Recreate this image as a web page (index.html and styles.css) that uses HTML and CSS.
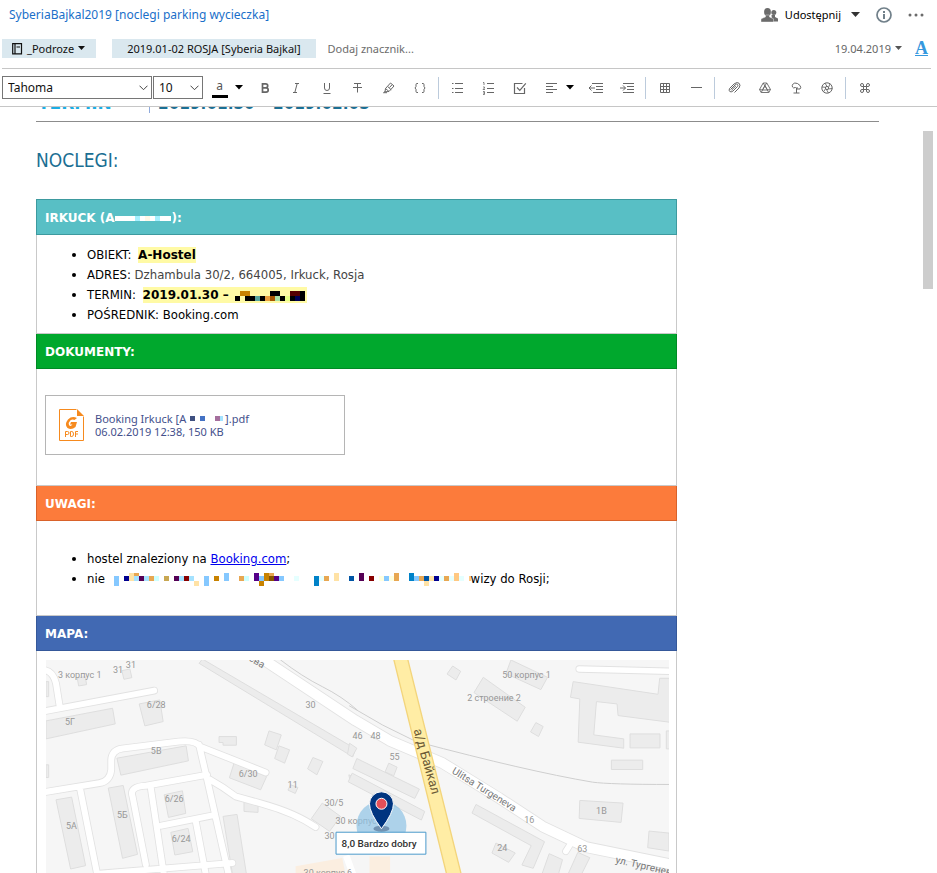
FILE: index.html
```html
<!DOCTYPE html>
<html lang="pl">
<head>
<meta charset="utf-8">
<meta name="viewport" content="width=device-width, initial-scale=1">
<title>SyberiaBajkal2019</title>
<link rel="stylesheet" href="styles.css">
</head>
<body>
<header class="note-head">
  <div class="title-row">
    <h1 class="note-title">SyberiaBajkal2019 [noclegi parking wycieczka]</h1>
    <button class="share" type="button">
      <svg width="18" height="14" viewBox="0 0 18 14"><g fill="#6b6b6b"><circle cx="12.800" cy="4.500" r="2.500"/><path d="M10.500 7h3.500v2l3 1.500v3h-6z"/><ellipse cx="6.500" cy="4" rx="3.400" ry="4"/><path d="M4.500 7h4v2l4 1.800v3.200H0v-2.500q0-1.200 4.500-2.500z" stroke="#fff" stroke-width=".4"/></g></svg>
      <span>Udostępnij</span>
      <svg width="9" height="5" viewBox="0 0 9 5"><path d="M0 0h9L4.500 5z" fill="#333"/></svg>
    </button>
    <button class="plain" type="button" aria-label="Informacje"><svg width="16" height="16" viewBox="0 0 16 16"><circle cx="8" cy="8" r="7" fill="none" stroke="#71808a" stroke-width="1.700"/><path d="M7 4h2v2H7zM7 7h2v5H7z" fill="#71808a"/></svg></button>
    <button class="plain" type="button" aria-label="Więcej"><svg width="16" height="4" viewBox="0 0 16 4"><g fill="#6b6b6b"><circle cx="2" cy="2" r="1.500"/><circle cx="8" cy="2" r="1.500"/><circle cx="14" cy="2" r="1.500"/></g></svg></button>
  </div>
  <div class="tag-row">
    <button class="chip" type="button">
      <svg width="11" height="12" viewBox="0 0 11 12"><path d="M.7.600h8.800v10.300H.7zM3 .6v10.300M4.500 4h3.500" fill="none" stroke="#111" stroke-width="1.200"/></svg>
      <span>_Podroze</span>
      <svg width="7" height="5" viewBox="0 0 7 5"><path d="M0 0h7L3.500 4z" fill="#111"/></svg>
    </button>
    <button class="chip tag" type="button">2019.01-02 ROSJA [Syberia Bajkal]</button>
    <input class="add-tag" type="text" placeholder="Dodaj znacznik..." aria-label="Dodaj znacznik">
    <button class="date" type="button"><span>19.04.2019</span><svg width="7" height="5" viewBox="0 0 7 5"><path d="M0 0h7L3.500 4z" fill="#555"/></svg></button>
    <button class="plain format" type="button" aria-label="Formatowanie">A</button>
  </div>
</header>
<div class="toolbar" role="toolbar" aria-label="Formatowanie tekstu">
  <div class="pick pick-font">
    <select aria-label="Czcionka"><option>Tahoma</option></select>
    <svg width="9" height="6" viewBox="0 0 9 6"><path d="M.5.700l4 4 4-4" fill="none" stroke="#444"/></svg>
  </div>
  <div class="pick pick-size">
    <select aria-label="Rozmiar"><option>10</option></select>
    <svg width="9" height="6" viewBox="0 0 9 6"><path d="M.5.700l4 4 4-4" fill="none" stroke="#444"/></svg>
  </div>
  <button class="tool color" type="button" aria-label="Kolor tekstu"><span>a</span></button>
  <button class="drop" type="button" aria-label="Wybierz kolor"><svg width="8" height="5" viewBox="0 0 8 5"><path d="M0 0h8L4 4.500z"/></svg></button>
  <button class="tool" type="button" aria-label="Pogrubienie"><svg width="16" height="16" viewBox="0 0 16 16"><path d="M5.500 3.800h3.200q2 0 2 1.900T8.700 7.800H5.500zm0 4h3.500q2.200 0 2.200 2.100T9 12.200H5.500z" stroke-width="1.700"/></svg></button>
  <button class="tool" type="button" aria-label="Kursywa"><svg width="16" height="16" viewBox="0 0 16 16"><path d="M7 3.500h4M5 12.500h4M9.200 3.500l-2.400 9"/></svg></button>
  <button class="tool" type="button" aria-label="Podkreślenie"><svg width="16" height="16" viewBox="0 0 16 16"><path d="M5.500 3v5q0 2.500 2.500 2.500T10.500 8V3M4.500 13.500h7"/></svg></button>
  <button class="tool" type="button" aria-label="Przekreślenie"><svg width="16" height="16" viewBox="0 0 16 16"><path d="M4 3.500h7M7.500 3.500v9M3 7.500h9"/></svg></button>
  <button class="tool" type="button" aria-label="Wyróżnienie"><svg width="16" height="16" viewBox="0 0 16 16"><path d="M4.500 8.500l5-5.500 3.500 3-5 5.500-4 .3zM4.500 8.500L8 11.500M7 6.800l3.200 3M4 11.500L2.500 12.700H6M8.500 7.500l2.500-2.700"/></svg></button>
  <button class="tool" type="button" aria-label="Kod"><svg width="16" height="16" viewBox="0 0 16 16"><path d="M6 3.500H5q-1 0-1 1v2L3 8l1 1.300v2.200q0 1 1 1h1M10 3.500h1q1 0 1 1v2L13 8l-1 1.300v2.200q0 1-1 1h-1"/></svg></button>
  <span class="sep"></span>
  <button class="tool" type="button" aria-label="Lista punktowana"><svg width="16" height="16" viewBox="0 0 16 16"><path d="M5 3.500h8M5 8.500h8M5 12.500h8M2 3.500h1.500M2 8.500h1.500M2 12.500h1.500"/></svg></button>
  <button class="tool" type="button" aria-label="Lista numerowana"><svg width="16" height="16" viewBox="0 0 16 16"><path d="M6 3.500h7M6 8.500h7M6 12.500h7"/><path d="M2 2.500h1v2.500M2 7h1.500v1L2 9.500h2M2 11.500h1.500v3H2M2 13h1.500" stroke-width=".8"/></svg></button>
  <button class="tool" type="button" aria-label="Pole wyboru"><svg width="16" height="16" viewBox="0 0 16 16"><path d="M10.500 3.500h-8v10h10V8M5 7.500l2.800 2.800 6-7" stroke-width="1.200"/></svg></button>
  <button class="tool" type="button" aria-label="Wyrównanie"><svg width="16" height="16" viewBox="0 0 16 16"><path d="M3 3.500h11M3 6.500h7M3 9.500h11M3 12.500h7"/></svg></button>
  <button class="drop" type="button" aria-label="Wybierz wyrównanie"><svg width="8" height="5" viewBox="0 0 8 5"><path d="M0 0h8L4 4.500z"/></svg></button>
  <button class="tool" type="button" aria-label="Zmniejsz wcięcie"><svg width="16" height="16" viewBox="0 0 16 16"><path d="M4 3.500h11M8 6.500h7M8 9.500h7M5 12.500h10M1 8h6M3.500 5.500L1 8l2.500 2.500"/></svg></button>
  <button class="tool" type="button" aria-label="Zwiększ wcięcie"><svg width="16" height="16" viewBox="0 0 16 16"><path d="M4 3.500h11M8 6.500h7M8 9.500h7M4 12.500h11M1 8h5.500M4 5.500L6.500 8 4 10.500"/></svg></button>
  <span class="sep"></span>
  <button class="tool" type="button" aria-label="Tabela"><svg width="16" height="16" viewBox="0 0 16 16"><path d="M3.500 3.500h9v9h-9zM6.500 3.500v9M9.500 3.500v9M3.500 6.500h9M3.500 9.500h9"/></svg></button>
  <button class="tool" type="button" aria-label="Linia pozioma"><svg width="16" height="16" viewBox="0 0 16 16"><path d="M3 7.500h11"/></svg></button>
  <span class="sep"></span>
  <button class="tool" type="button" aria-label="Załącznik"><svg width="16" height="16" viewBox="0 0 16 16"><path d="M4.500 9.500l5-5q1.200-1 2 0t0 2L7 11q-2 1.500-3.200.5T3.500 8.500L8 4q3-2.500 5-.8T13 8l-4.500 4.500M5.500 10.200L10 5.800"/></svg></button>
  <button class="tool" type="button" aria-label="Dysk Google"><svg width="16" height="16" viewBox="0 0 16 16"><path d="M6.200 3h3.600l3.700 6.500-1.700 3H4.200l-1.700-3zM8 5.500l2.500 4.500h-5zM9.800 3L8 5.500M6.200 3l5.600 9.500M2.500 9.500L5.500 10M13.500 9.500l-3 .5M8 5.500L4.200 12.500" stroke-width=".9"/></svg></button>
  <button class="tool" type="button" aria-label="Nagranie"><svg width="16" height="16" viewBox="0 0 16 16"><path d="M4.500 4.500q2-2.500 5-1l2.500 2q1.500 2 0 3.500H9L7.500 7.500q-2.500 1-3-.5t0-2.500zM9 9V7M8.500 9v4M5.500 13h6"/></svg></button>
  <button class="tool" type="button" aria-label="Aparat"><svg width="16" height="16" viewBox="0 0 16 16"><circle cx="8" cy="8" r="5.200"/><circle cx="8" cy="8" r="1.600"/><path d="M8 6.400L6 3.200M9.500 7.500l1.500-3.700M9.300 9l4-.5M7.500 9.600l2 3.400M6.500 8.800l-2 3M6.600 7.300L3 7" stroke-width=".9"/></svg></button>
  <span class="sep"></span>
  <button class="tool" type="button" aria-label="Skróty"><svg width="16" height="16" viewBox="0 0 16 16"><path d="M6.500 6.500h3v3h-3zM6.500 6.500H5A1.500 1.500 0 1 1 6.500 5zM9.500 6.500V5A1.500 1.500 0 1 1 11 6.500zM9.500 9.500H11A1.500 1.500 0 1 1 9.500 11zM6.500 9.500V11A1.500 1.500 0 1 1 5 9.500z"/></svg></button>
</div>
<div class="editor">
  <main class="note">
    <p class="stay"><strong class="stay-label">TERMIN</strong><strong class="stay-dates">2019.01.30 – 2019.02.03</strong></p>
    <h2 class="section">NOCLEGI:</h2>
    <table class="plan">
      <tbody>
      <tr><th class="teal" scope="col">IRKUCK (A<svg class="mosaic" width="57" height="5" viewBox="0 0 57 5"><path fill="#fff" d="M0 0h56v5H0z"/><path fill="#a5f0ff" d="M20 0h5v5h-5zM40 0h5v5h-5z"/><path fill="#fff8e8" d="M30 0h5v5h-5z"/></svg>):</th></tr>
      <tr><td class="list-cell">
        <ul>
          <li>OBIEKT: <mark>A-Hostel</mark></li>
          <li>ADRES: <span class="address">Dzhambula 30/2, 664005, Irkuck, Rosja</span></li>
          <li>TERMIN: <mark>2019.01.30 – <svg class="mosaic low" width="74" height="12" viewBox="606 300 222 36"><path d="M612 318h15v15h-15zM642 318h30v15h-30zM687 318h15v15h-15zM717 303h30v15h-30zM747 318h15v15h-15zM777 318h15v15h-15zM807 303h15v30h-15z"/><path fill="#c88200" d="M627 303h30v15h-30z"/><path fill="#57a59d" d="M672 318h15v15h-15z"/><path fill="#e8a040" d="M702 318h15v15h-15z"/><path fill="#a85500" d="M717 318h15v15h-15z"/><path fill="#a8e2a5" d="M732 318h15v15h-15z"/><path fill="#e5ff85" d="M762 318h15v15h-15z"/><path fill="#500" d="M777 303h30v15h-30z"/><path fill="#000055" d="M792 318h15v15h-15z"/></svg></mark></li>
          <li>POŚREDNIK: Booking.com</li>
        </ul>
      </td></tr>
      <tr><th class="green" scope="col">DOKUMENTY:</th></tr>
      <tr><td class="file-cell">
        <a class="file" href="#">
          <svg width="25" height="32" viewBox="0 0 25 32"><path d="M17.500.5H.5v31h24V7.500" fill="none" stroke="#f68a1e"/><path d="M18 0l7 7h-7z" fill="#f68a1e"/><path d="M18 9q-5-2.500-9 1.500-4 5-.5 8.500 4 2.500 8-1l1.500-5h-6l-1 2.500h2.500q-2 2.500-3.500.5-.8-2.500 1.500-4.700 2-1.500 4-.3z" fill="#f68a1e"/><path d="M6.500 28v-5.500h2q1.500 0 1.500 1.500t-1.500 1.500h-2M11.500 22.500v5h1.300q1.700 0 1.700-2.500t-1.700-2.500zM16.500 28v-5.500H19M16.500 25H19" fill="none" stroke="#f68a1e"/></svg>
          <span class="file-text"><span>Booking Irkuck [A <svg class="mosaic name" width="36" height="6" viewBox="0 0 36 6"><path fill="#3f5080" d="M1 0h5v5H1z"/><path fill="#4472c4" d="M11 0h5v5h-5z"/><path fill="#a56f9d" d="M26 0h5v5h-5z"/><path fill="#a5e2ff" d="M31 0h3v5h-3z"/></svg>].pdf</span><span>06.02.2019 12:38, 150 KB</span></span>
        </a>
      </td></tr>
      <tr><th class="orange" scope="col">UWAGI:</th></tr>
      <tr><td class="notes-cell">
        <ul>
          <li>hostel znaleziony na <a href="#">Booking.com</a>;</li>
          <li>nie <svg class="mosaic low" width="362" height="14" viewBox="237 96 1086 42"><path fill="#85c8ff" d="M252 107h15v30h-15zM522 107h15v30h-15zM582 98h15v24h-15zM687 107h15v15h-15zM747 107h15v15h-15zM1062 107h15v15h-15zM1152 107h15v15h-15z"/><path fill="#000090" d="M282 107h15v15h-15zM1212 107h15v15h-15z"/><path fill="#ffe2a5" d="M297 98h15v24h-15zM492 122h15v15h-15zM912 98h15v24h-15zM1182 122h15v15h-15zM1197 107h15v15h-15z"/><path fill="#e8a752" d="M312 98h15v9h-15zM357 107h15v15h-15zM627 107h15v15h-15zM717 98h15v9h-15zM882 107h15v15h-15zM1092 98h15v24h-15zM1167 107h15v15h-15zM1242 107h15v15h-15z"/><path fill="#a5e2ff" d="M312 107h15v15h-15zM342 107h15v15h-15zM447 107h15v15h-15zM477 107h15v15h-15z"/><path fill="#505" d="M327 107h15v15h-15zM432 107h15v15h-15zM987 98h15v24h-15z"/><path fill="#cff" d="M372 107h15v15h-15zM642 107h15v15h-15z"/><path fill="#c8a752" d="M402 107h15v15h-15z"/><path fill="#800" d="M462 107h15v15h-15zM1017 107h15v15h-15z"/><path fill="#c88200" d="M552 107h15v15h-15zM687 122h15v15h-15zM702 98h15v24h-15z"/><path fill="#508" d="M672 98h15v24h-15zM732 107h15v15h-15z"/><path fill="#850" d="M717 107h15v15h-15z"/><path fill="#e5ffff" d="M792 107h15v15h-15zM867 107h15v15h-15zM1227 107h15v15h-15zM1257 107h15v15h-15zM1287 107h15v15h-15z"/><path fill="#0082c8" d="M852 107h15v30h-15zM1137 98h15v24h-15z"/><path fill="#0055a5" d="M957 107h15v15h-15zM1182 107h15v15h-15z"/><path fill="#ffffe0" d="M1047 107h15v15h-15zM1077 107h15v15h-15z"/><path fill="#ffc882" d="M1272 98h15v24h-15zM1317 107h6v15h-6z"/></svg>wizy do Rosji;</li>
        </ul>
      </td></tr>
      <tr><th class="blue" scope="col">MAPA:</th></tr>
      <tr><td class="map-cell">
        <svg class="map" viewBox="0 0 624 230" role="img" aria-label="Mapa okolicy hostelu">
          <path d="M0 0h624v230H0z" fill="#f6f6f6"/>
          <!-- western half: buildings, then streets -->
          <g transform="translate(-10 -10) scale(.33333)">
            <g fill="#ececec" stroke="#dedede" stroke-width="3">
              <path d="M30 213l200-38 8 47-208 45zM310 162l62-12 10 65-55 13zM243 325l208-37 7 45-203 43zM60 450l47-8 42 206-45 10zM217 415l45-8 43 207-45 12zM385 435l55-12 10 68-52 12zM405 548l52-12 14 70-54 10zM562 500l42-6 30 190h-42zM595 340l98 40-18 40-94-36zM550 260h52v26h-40v-8h-12zM700 243l37 12-15 45-35-15zM730 288l32 12-15 40-30-14zM832 323l30 12-18 40-28-18zM625 455l42 3v30l-42-3zM860 460l55 40-33 45-55-38zM490 40l10-13 460 270-8 24zM258 62l24-5 6 26-24 5zM124 84l24-4 4 24-24 4zM30 345h8v38h-8zM30 95h8v45h-8zM765 405l22 8-8 18-22-10zM940 375l25 10v15l-22-10z"/>
            </g>
            <g fill="none" stroke-linecap="round" stroke-linejoin="round">
              <g stroke="#e2e2e2"><path stroke-width="23" d="M20 185L355 122M72 175L60 100Q50 60 20 60M20 428L190 400Q222 395 226 360V330Q228 300 260 296L430 275Q480 270 492 290L690 368M490 285L514 388L580 680M514 375L330 408Q280 410 290 440L330 645M345 415L385 680M375 528L530 497M480 515L515 700M132 415L185 680M190 672L590 640M520 388Q560 410 600 440L680 462Q780 490 840 532"/></g>
              <g stroke="#fff"><path stroke-width="18" d="M20 185L355 122M72 175L60 100Q50 60 20 60M20 428L190 400Q222 395 226 360V330Q228 300 260 296L430 275Q480 270 492 290L690 368M490 285L514 388L580 680M514 375L330 408Q280 410 290 440L330 645M345 415L385 680M375 528L530 497M480 515L515 700M132 415L185 680M190 672L590 640M520 388Q560 410 600 440L680 462Q780 490 840 532"/></g>
              <path d="M735 30Q800 80 860 110T965 180" stroke="#cfcfcf" stroke-width="3"/>
            </g>
            <path d="M780 650l140-25 12 60H780z" fill="#fbeee0"/>
          </g>
          <!-- eastern half -->
          <g transform="translate(304 -10) scale(.33333)">
            <g fill="#ececec" stroke="#dedede" stroke-width="3">
              <path d="M310 48l24 16-14 26-27-18zM485 30l110 52-20 37-105-48zM402 82l126 90-24 42-130-86zM560 218l22 12-14 30-24-14zM672 95l255 38 5-48h30v132l-155-20-3-35-62-7-8 100 90 12v28l-137-18 5-130-28-5zM843 252h90v42h-90zM787 331h94v28h-94zM692 452l130 8-6 58-126-12zM900 544l60 6v54l-64-10zM380 464l206 112-34 80-34-10 28-58-178-98zM440 580l58 30-20 28-50-28zM600 612l40 18-14 50h-50zM686 608l36 16-30 60h-40zM22 326l188 92-14 28-186-90zM8 370l218 115-10 26-220-115zM118 340l25 12-10 26-26-12zM0 280l22 15-14 26-14-8zM952 243h12v54h-12z"/>
            </g>
            <g fill="none" stroke-linecap="round" stroke-linejoin="round">
              <path d="M0 168Q100 230 200 275Q370 320 500 350T730 397Q780 404 965 404" stroke="#cfcfcf" stroke-width="3"/>
              <path d="M-302 0L18 212L120 272L280 340L450 445L580 530L710 592L970 645" stroke="#e2e2e2" stroke-width="35"/>
              <path d="M690 57L970 64M650 605l18-28" stroke="#e2e2e2" stroke-width="22"/>
              <path d="M-302 0L18 212L120 272L280 340L450 445L580 530L710 592L970 645" stroke="#fff" stroke-width="30"/>
              <path d="M690 57L970 64M650 605l18-28" stroke="#fff" stroke-width="17"/>
            </g>
            <path d="M131 20h42L362 780h-44z" fill="#ffeda5" stroke="#f3d57c" stroke-width="4"/>
            <path d="M-10 618l22 60" stroke="#fff" stroke-width="20"/>
            <path d="M60 620h62v60H60z" fill="#fbeee0"/>
          </g>
          <g class="map-text">
            <text x="12" y="18">3 корпус 1</text><text x="67" y="13">31</text><text x="80" y="8">31</text>
            <text x="101" y="48">6/28</text><text x="19" y="65">5Г</text><text x="105" y="94">5В</text>
            <text x="193" y="117">6/30</text><text x="242" y="128">11</text><text x="119" y="142">6/26</text>
            <text x="71" y="158">5Б</text><text x="20" y="169">5А</text><text x="126" y="182">6/24</text>
            <text x="260" y="48">30</text><text x="279" y="146">30/5</text><text x="290" y="164">30 корпус</text><text x="279" y="179">30</text>
            <text x="258" y="216">30 корпус 6</text>
            <text x="307" y="79">46</text><text x="325" y="79">48</text><text x="344" y="100">55</text>
            <text x="457" y="18">50 корпус 1</text><text x="422" y="41">2 строение 2</text>
            <text x="479" y="163">16</text><text x="551" y="154">1В</text><text x="452" y="191">24</text><text x="532" y="192">63</text>
            <text class="street" transform="translate(176 -16) rotate(31)">Тургенева</text>
            <text class="street" transform="translate(406 113) rotate(32)">Ulitsa Turgeneva</text>
            <text class="street" transform="translate(570 203) rotate(13)">ул. Тургенева</text>
            <text class="highway" transform="translate(368 70) rotate(74)">а/д Байкал</text>
          </g>
          <circle cx="336" cy="166" r="25" fill="#8ec3e6" opacity=".7"/>
          <ellipse cx="336" cy="169" rx="8" ry="3" fill="#59789a" opacity=".7"/>
          <path d="M336 169q-12-16-12-25a12 12 0 0 1 24 0q0 9-12 25z" fill="#003580" stroke="#fff"/>
          <circle cx="336" cy="144" r="5.500" fill="#e45058" stroke="#fff"/>
          <path d="M290.500 172.500h90v22h-90z" fill="#fff" stroke="#4a9acb"/>
          <text class="score" x="296" y="187">8,0 Bardzo dobry</text>
        </svg>
      </td></tr>
      </tbody>
    </table>
  </main>
  <div class="scroll"><div class="thumb"></div></div>
</div>
</body>
</html>
```
FILE: styles.css
```css
* { box-sizing: border-box; }

body {
  margin: 0;
  height: 100vh;
  display: flex;
  flex-direction: column;
  overflow: hidden;
  background: #fff;
  color: #111;
  font: 12px/20px "Noto Sans", "Open Sans", sans-serif;
}

button, input, select {
  margin: 0;
  padding: 0;
  border: 0;
  background: none;
  color: inherit;
  font: inherit;
}

svg { flex: none; }

/* Note header */
.note-head {
  margin: 0 6px 0 2px;
  border-bottom: 1px solid #c6c6c6;
  font-size: 11px;
}

.title-row, .tag-row {
  display: flex;
  align-items: center;
}

.title-row {
  height: 29px;
  gap: 16px;
  padding: 0 7px;
}

.note-title {
  flex: 1;
  margin: 0;
  color: #1a6fc9;
  font-size: 12px;
  font-weight: 400;
}

.share, .chip, .date {
  display: flex;
  align-items: center;
}

.share { gap: 6px; color: #000; }
.share span { margin-right: 4px; }

.plain { display: flex; align-items: center; }

.tag-row {
  height: 39px;
  padding-right: 3px;
}

.chip {
  height: 19px;
  gap: 4px;
  padding: 0 11px 0 10px;
  background: #dae8ef;
}

.tag {
  margin-left: 16px;
  padding: 0 15px;
}

.add-tag {
  flex: 1;
  min-width: 0;
  margin-left: 12px;
}

.add-tag::placeholder { color: #6c6c6c; opacity: 1; }

.date { gap: 4px; color: #666; }

.format {
  margin-left: 13px;
  border-bottom: 1px solid #3598de;
  color: #3598de;
  font: bold 18px/14px "Liberation Serif", serif;
}

/* Formatting toolbar */
.toolbar {
  display: flex;
  align-items: center;
  height: 38px;
  padding-left: 2px;
  border-bottom: 1px solid #c6c6c6;
}

.pick { position: relative; margin-right: 1px; }
.pick-font { width: 150px; }
.pick-size { width: 50px; }

.pick select {
  width: 100%;
  height: 23px;
  padding: 0 5px;
  border: 1px solid #767676;
  appearance: none;
  background: #fff;
}

.pick svg {
  position: absolute;
  top: 9px;
  right: 4px;
  pointer-events: none;
}

.tool {
  display: flex;
  justify-content: center;
  width: 31px;
}

.tool svg {
  fill: none;
  stroke: #666;
}

.color span {
  width: 16px;
  border-bottom: 3px solid #000;
  color: #555;
  line-height: 18px;
}

.drop { display: flex; width: 14px; }

.sep {
  width: 1px;
  height: 22px;
  margin: 0 3px;
  background: #bccbdc;
}

/* Note body */
.editor {
  flex: 1;
  min-height: 0;
  display: flex;
  overflow: hidden;
}

.note {
  flex: 1;
  min-width: 0;
  padding: 0 44px 0 36px;
  color: #000;
  font: 13px/20px "DejaVu Sans Condensed", "DejaVu Sans", sans-serif;
}

.stay {
  display: flex;
  margin: -14px 0 0;
  padding-bottom: 8px;
  border-bottom: 1px solid #8c8c8c;
  font-size: 17px;
  line-height: 20px;
}

.stay-label {
  width: 114px;
  padding-left: 2px;
  border-right: 1px solid #8faadc;
  color: #1cade4;
  font-family: "DejaVu Sans", sans-serif;
}

.stay-dates { padding-left: 8px; color: #1b6f93; }

.section {
  margin: 26px 0;
  color: #1b6f93;
  font-size: 19px;
  font-weight: 400;
  line-height: 25px;
}

.plan {
  width: 100%;
  max-width: 641px;
  border-collapse: collapse;
}

.plan th, .plan td {
  border: 1px solid #c9c9c9;
  padding: 0 8px;
  text-align: left;
}

.plan th {
  padding: 8px 8px 6px;
  color: #fff;
  font-family: "DejaVu Sans", sans-serif;
  font-size: 12px;
}

.plan .teal { background: #58bfc5; border-color: #3d9a9f; }
.plan .green { background: #00a82d; border-color: #008a25; }
.plan .orange { background: #fc7b3b; border-color: #d9622a; }
.plan .blue { background: #4169b3; border-color: #35589a; }

.plan ul { margin: 0; padding-left: 42px; }

.plan .list-cell { padding-top: 10px; padding-bottom: 8px; }
.plan .file-cell { padding-top: 26px; padding-bottom: 30px; }
.plan .notes-cell { padding-top: 28px; padding-bottom: 26px; }
.plan .map-cell { padding: 9px 7px 9px 9px; }

mark {
  margin-left: 3px;
  padding: 1px 0;
  background: #fffaa5;
  font: bold 12px "DejaVu Sans", sans-serif;
}

.address { color: #444; }

.notes-cell a { color: #00e; }

.mosaic { vertical-align: 1px; shape-rendering: crispEdges; }
.low { vertical-align: -3px; }

.file {
  display: flex;
  align-items: center;
  gap: 11px;
  width: 300px;
  height: 60px;
  padding: 0 13px;
  border: 1px solid #b5b5b5;
  color: #44508c;
  font: 11px/13px "Noto Sans", "Open Sans", sans-serif;
  text-decoration: none;
}

.file-text { display: flex; flex-direction: column; }

.map { display: block; width: 100%; }

.map-text {
  fill: #979797;
  font: 9px Roboto, sans-serif;
}

.street { fill: #777; font-size: 10px; }
.highway { fill: #6b5a35; font-size: 13px; }
.score { fill: #333; font: 500 10px Roboto, sans-serif; }

/* Scrollbar */
.scroll { width: 14px; padding-top: 24px; }

.thumb {
  width: 10px;
  height: 158px;
  background: #cdcdcd;
}
```
